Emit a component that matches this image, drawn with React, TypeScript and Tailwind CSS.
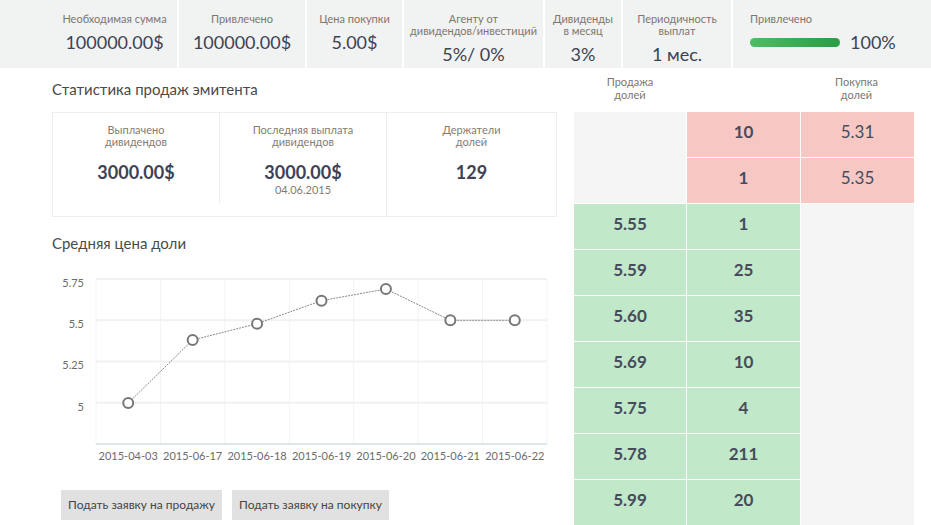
import React from 'react';

const FONT = { fontFamily: 'Lato, "Noto Sans", sans-serif' };

type TopCell = { label: string[]; value: string; w: string };

const topCells: TopCell[] = [
  { label: ['Необходимая сумма'], value: '100000.00$', w: 'w-[127px]' },
  { label: ['Привлечено'], value: '100000.00$', w: 'w-[128px]' },
  { label: ['Цена покупки'], value: '5.00$', w: 'w-[97px]' },
  { label: ['Агенту от', 'дивидендов/инвестиций'], value: '5%/ 0%', w: 'w-[141px]' },
  { label: ['Дивиденды', 'в месяц'], value: '3%', w: 'w-[78px]' },
  { label: ['Периодичность', 'выплат'], value: '1 мес.', w: 'w-[110px]' },
];

const TopBar: React.FC = () => (
  <div className="flex h-[68px] bg-[#f1f2f2] pl-[52px]">
    {topCells.map((c, i) => (
      <div key={i} className={`${c.w} shrink-0 border-r-2 border-white pt-[13px] text-center`}>
        <div className="text-[11px] leading-[12px] text-[#80766d]">
          {c.label.map((l, j) => (
            <div key={j}>{l}</div>
          ))}
        </div>
        <div className="mt-[6px] text-[18px] leading-[22px] text-[#3d4254]">{c.value}</div>
      </div>
    ))}
    <div className="flex-1 pl-[17px] pt-[13px]">
      <div className="text-[11px] leading-[12px] text-[#80766d]">Привлечено</div>
      <div className="mt-[6px] flex items-center">
        <div className="h-[9px] w-[90px] rounded-full bg-gradient-to-r from-[#4fbb65] to-[#2a9c44]" />
        <div className="ml-[10px] text-[18px] leading-[22px] text-[#3d4254]">100%</div>
      </div>
    </div>
  </div>
);

const StatsBox: React.FC = () => (
  <div className="mt-[13px] flex h-[105px] border border-[#eeeeee]">
    <div className="h-[91px] w-[167px] border-r border-[#eeeeee] pt-[11px] text-center">
      <div className="text-[11px] leading-[12px] text-[#857b72]">
        <div>Выплачено</div>
        <div>дивидендов</div>
      </div>
      <div className="mt-[13px] text-[18px] font-bold leading-[22px] text-[#3d4254]">3000.00$</div>
    </div>
    <div className="w-[166px] pt-[11px] text-center">
      <div className="text-[11px] leading-[12px] text-[#857b72]">
        <div>Последняя выплата</div>
        <div>дивидендов</div>
      </div>
      <div className="mt-[13px] text-[18px] font-bold leading-[22px] text-[#3d4254]">3000.00$</div>
      <div className="text-[11px] leading-[14px] text-[#857b72]">04.06.2015</div>
    </div>
    <div className="flex-1 border-l border-[#eeeeee] pt-[11px] text-center">
      <div className="text-[11px] leading-[12px] text-[#857b72]">
        <div>Держатели</div>
        <div>долей</div>
      </div>
      <div className="mt-[13px] text-[18px] font-bold leading-[22px] text-[#3d4254]">129</div>
    </div>
  </div>
);

const dates = ['2015-04-03', '2015-06-17', '2015-06-18', '2015-06-19', '2015-06-20', '2015-06-21', '2015-06-22'];
const pointsY = [150, 87, 70.7, 47.7, 36, 67.3, 67.3];

const Chart: React.FC = () => {
  const left = 44;
  const right = 495;
  const top = 26;
  const bottom = 191;
  const step = (right - left) / 7;
  const xs = dates.map((_, i) => left + step * (i + 0.5));
  const yTicks: [string, number][] = [
    ['5.75', 26],
    ['5.5', 67.25],
    ['5.25', 108.5],
    ['5', 149.75],
  ];
  const line = xs.map((x, i) => `${x},${pointsY[i]}`).join(' ');
  return (
    <svg width={505} height={215} className="block" style={FONT}>
      <rect x={left} y={top} width={right - left} height={bottom - top} fill="#ffffff" />
      {Array.from({ length: 8 }).map((_, k) => (
        <line key={k} x1={left + step * k} x2={left + step * k} y1={top} y2={bottom} stroke="#f2f3f4" strokeWidth={1} />
      ))}
      {yTicks.map(([label, y]) => (
        <g key={label}>
          <line x1={left} x2={right} y1={y} y2={y} stroke="#f0f1f2" strokeWidth={2} />
          <text x={32} y={y + 5} textAnchor="end" dominantBaseline="middle" fontSize={11} fill="#6b6b6b">
            {label}
          </text>
        </g>
      ))}
      <line x1={left} x2={right} y1={bottom} y2={bottom} stroke="#dbe6ee" strokeWidth={2} />
      <polyline points={line} fill="none" stroke="#8a8a8a" strokeWidth={1} strokeDasharray="2 1" />
      {xs.map((x, i) => (
        <circle key={i} cx={x} cy={pointsY[i]} r={5} fill="#ffffff" stroke="#777777" strokeWidth={2} />
      ))}
      {xs.map((x, i) => (
        <text key={dates[i]} x={x} y={204} textAnchor="middle" dominantBaseline="middle" fontSize={11} fill="#6b6b6b">
          {dates[i]}
        </text>
      ))}
    </svg>
  );
};

const sells: [string, string][] = [
  ['5.55', '1'],
  ['5.59', '25'],
  ['5.60', '35'],
  ['5.69', '10'],
  ['5.75', '4'],
  ['5.78', '211'],
  ['5.99', '20'],
];

const buys: [string, string][] = [
  ['10', '5.31'],
  ['1', '5.35'],
];

const cell = 'flex items-center justify-center pb-[5px]';

const OrderBook: React.FC = () => (
  <div className="ml-[17px] w-[340px]">
    <div className="flex h-[44px] pt-[7px] text-[11px] leading-[13px] text-[#80766d]">
      <div className="w-[112px] text-center">
        <div>Продажа</div>
        <div>долей</div>
      </div>
      <div className="w-[114px]" />
      <div className="w-[113px] text-center">
        <div>Покупка</div>
        <div>долей</div>
      </div>
    </div>
    <div className="grid grid-cols-[112px_113px_113px] grid-rows-[repeat(9,45px)] gap-px bg-white text-[17px] text-[#474b5c]">
      <div className="row-span-2 bg-[#f5f5f5]" />
      {buys.map(([q, p]) => (
        <React.Fragment key={p}>
          <div className={`${cell} bg-[#f7c7c3] font-bold`}>{q}</div>
          <div className={`${cell} bg-[#f7c7c3]`}>{p}</div>
        </React.Fragment>
      ))}
      {sells.map(([p, q], i) => (
        <React.Fragment key={p}>
          <div className={`${cell} bg-[#c0e8c9] font-bold`}>{p}</div>
          <div className={`${cell} bg-[#c0e8c9] font-bold`}>{q}</div>
          {i === 0 && <div className="row-span-7 bg-[#f5f5f5]" />}
        </React.Fragment>
      ))}
    </div>
  </div>
);

export default function App() {
  return (
    <div className="h-[525px] w-[931px] overflow-hidden bg-white" style={FONT}>
      <TopBar />
      <div className="flex">
        <div className="ml-[52px] w-[505px]">
          <h2 className="mt-[11px] text-[15px] leading-[20px] text-[#4a4a4a]">Статистика продаж эмитента</h2>
          <StatsBox />
          <h2 className="mt-[16px] text-[15px] leading-[20px] text-[#4a4a4a]">Средняя цена доли</h2>
          <Chart />
          <div className="ml-[9px] mt-[22px] flex gap-[10px]">
            <button className="h-[30px] w-[161px] bg-[#e1e1e1] text-[12px] text-[#444444]">Подать заявку на продажу</button>
            <button className="h-[30px] w-[157px] bg-[#e1e1e1] text-[12px] text-[#444444]">Подать заявку на покупку</button>
          </div>
        </div>
        <OrderBook />
      </div>
    </div>
  );
}
